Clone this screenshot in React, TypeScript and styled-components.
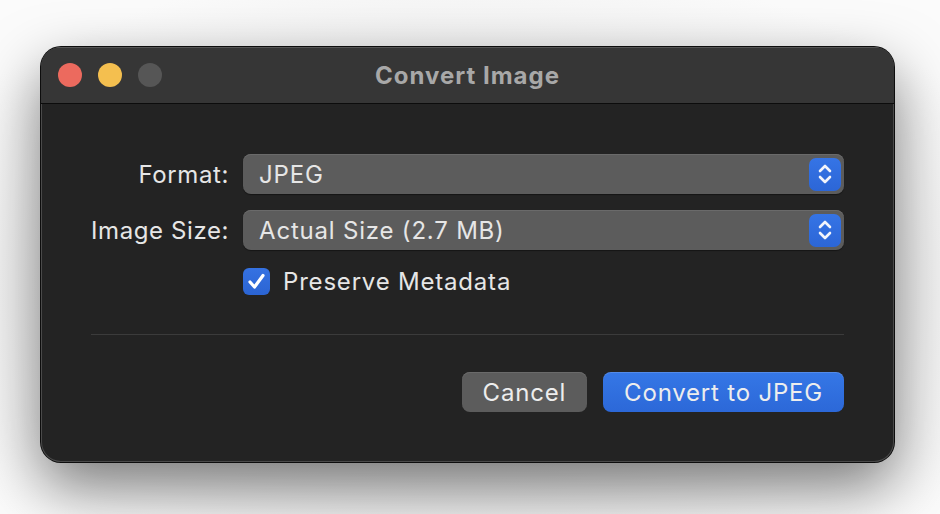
import React, { FC } from "react";
import styled, { createGlobalStyle } from "styled-components";

const colors = {
  page: "#ffffff",
  titlebar: "#363636",
  body: "#232323",
  text: "#e6e6e6",
  title: "#a8a8a8",
  control: "#5c5c5c",
  blue: "#2f6ddc",
  divider: "#3b3b3b",
};

const GlobalStyle = createGlobalStyle`
  html, body {
    margin: 0;
    padding: 0;
    background: ${colors.page};
  }
  body {
    font-family: Inter, "Noto Sans", "Liberation Sans", sans-serif;
    -webkit-font-smoothing: antialiased;
  }
`;

const Chevrons: FC = () => (
  <svg width="18" height="26" viewBox="0 0 18 26" fill="none">
    <path
      d="M4 10 L9 5 L14 10 M4 16 L9 21 L14 16"
      stroke="#f2f4fb"
      strokeWidth="2.6"
      strokeLinecap="round"
      strokeLinejoin="round"
    />
  </svg>
);

const Check: FC = () => (
  <svg width="21" height="21" viewBox="0 0 21 21" fill="none">
    <path
      d="M4 11 L8.5 16 L17 4.5"
      stroke="#ffffff"
      strokeWidth="3.2"
      strokeLinecap="round"
      strokeLinejoin="round"
    />
  </svg>
);

const PopUp: FC<{ value: string }> = ({ value }) => (
  <Select>
    <SelectValue>{value}</SelectValue>
    <Stepper>
      <Chevrons />
    </Stepper>
  </Select>
);

const App: FC = () => {
  return (
    <Page>
      <GlobalStyle />
      <Window>
        <TitleBar>
          <Lights>
            <Light color="#ec6a5e" />
            <Light color="#f4bf4f" />
            <Light color="#565656" />
          </Lights>
          <Title>Convert Image</Title>
          <span />
        </TitleBar>
        <Body>
          <Form>
            <Label>Format:</Label>
            <PopUp value="JPEG" />
            <Label>Image Size:</Label>
            <PopUp value="Actual Size (2.7 MB)" />
            <span />
            <CheckRow>
              <CheckBox>
                <Check />
              </CheckBox>
              <CheckText>Preserve Metadata</CheckText>
            </CheckRow>
          </Form>
          <Divider />
          <Buttons>
            <Button>Cancel</Button>
            <Button primary>Convert to JPEG</Button>
          </Buttons>
        </Body>
      </Window>
    </Page>
  );
};

export default App;

const Page = styled.div`
  width: 940px;
  height: 514px;
  padding: 47px 0 0 41px;
  box-sizing: border-box;
  overflow: hidden;
  background: radial-gradient(
    ellipse 620px 330px at 468px 290px,
    #d2d2d2 0%,
    #ececec 60%,
    #fbfbfb 100%
  );
`;

const Window = styled.div`
  width: 853px;
  height: 415px;
  display: flex;
  flex-direction: column;
  border-radius: 20px;
  overflow: hidden;
  background: ${colors.body};
  box-shadow: 0 0 0 1px #0d0d0d, inset 0 0 0 1px #4a4a4a,
    0 24px 60px rgba(0, 0, 0, 0.5);
`;

const TitleBar = styled.div`
  height: 56px;
  flex-shrink: 0;
  display: grid;
  grid-template-columns: 1fr auto 1fr;
  align-items: center;
  padding: 0 17px;
  background: ${colors.titlebar};
  border-bottom: 1px solid #0c0c0c;
  box-shadow: inset 0 1px 0 #555;
`;

const Lights = styled.div`
  display: flex;
  gap: 16px;
`;

const Light = styled.span<{ color: string }>`
  width: 24px;
  height: 24px;
  border-radius: 50%;
  background: ${(p) => p.color};
`;

const Title = styled.div`
  font-size: 24px;
  font-weight: 700;
  color: ${colors.title};
  letter-spacing: 1px;
`;

const Body = styled.div`
  flex: 1;
  padding: 50px;
  display: flex;
  flex-direction: column;
`;

const Form = styled.div`
  display: grid;
  grid-template-columns: max-content 1fr;
  column-gap: 14px;
  row-gap: 16px;
  align-items: center;
`;

const Label = styled.div`
  text-align: right;
  white-space: nowrap;
  font-size: 24px;
  letter-spacing: 0.6px;
  color: ${colors.text};
`;

const Select = styled.div`
  height: 40px;
  box-sizing: border-box;
  display: flex;
  align-items: center;
  justify-content: space-between;
  padding: 0 3px 0 16px;
  border-radius: 8px;
  background: ${colors.control};
  box-shadow: inset 0 1px 0 #6a6a6a, 0 1px 1px rgba(0, 0, 0, 0.4);
`;

const SelectValue = styled.span`
  font-size: 24px;
  letter-spacing: 0.8px;
  color: ${colors.text};
`;

const Stepper = styled.span`
  width: 32px;
  height: 33px;
  display: flex;
  align-items: center;
  justify-content: center;
  border-radius: 7px;
  background: linear-gradient(#3574e6, #2c66d6);
`;

const CheckRow = styled.label`
  height: 27px;
  display: flex;
  align-items: center;
  gap: 13px;
  margin-top: 2px;
`;

const CheckBox = styled.span`
  width: 27px;
  height: 27px;
  display: flex;
  align-items: center;
  justify-content: center;
  border-radius: 6px;
  background: linear-gradient(#3572e2, #2b64d3);
`;

const CheckText = styled.span`
  font-size: 24px;
  line-height: 27px;
  letter-spacing: 0.8px;
  color: ${colors.text};
`;

const Divider = styled.div`
  height: 1px;
  margin: 39px 0 37px;
  background: ${colors.divider};
`;

const Buttons = styled.div`
  display: flex;
  justify-content: flex-end;
  gap: 16px;
`;

const Button = styled.button<{ primary?: boolean }>`
  height: 40px;
  padding: 0 21px;
  border: none;
  border-radius: 8px;
  font-family: inherit;
  font-size: 24px;
  letter-spacing: 0.8px;
  color: #ededed;
  background: ${(p) =>
    p.primary ? "linear-gradient(#3577e6, #2c68d8)" : colors.control};
  box-shadow: inset 0 1px 0
    ${(p) => (p.primary ? "rgba(255,255,255,0.15)" : "#6a6a6a")};
`;
